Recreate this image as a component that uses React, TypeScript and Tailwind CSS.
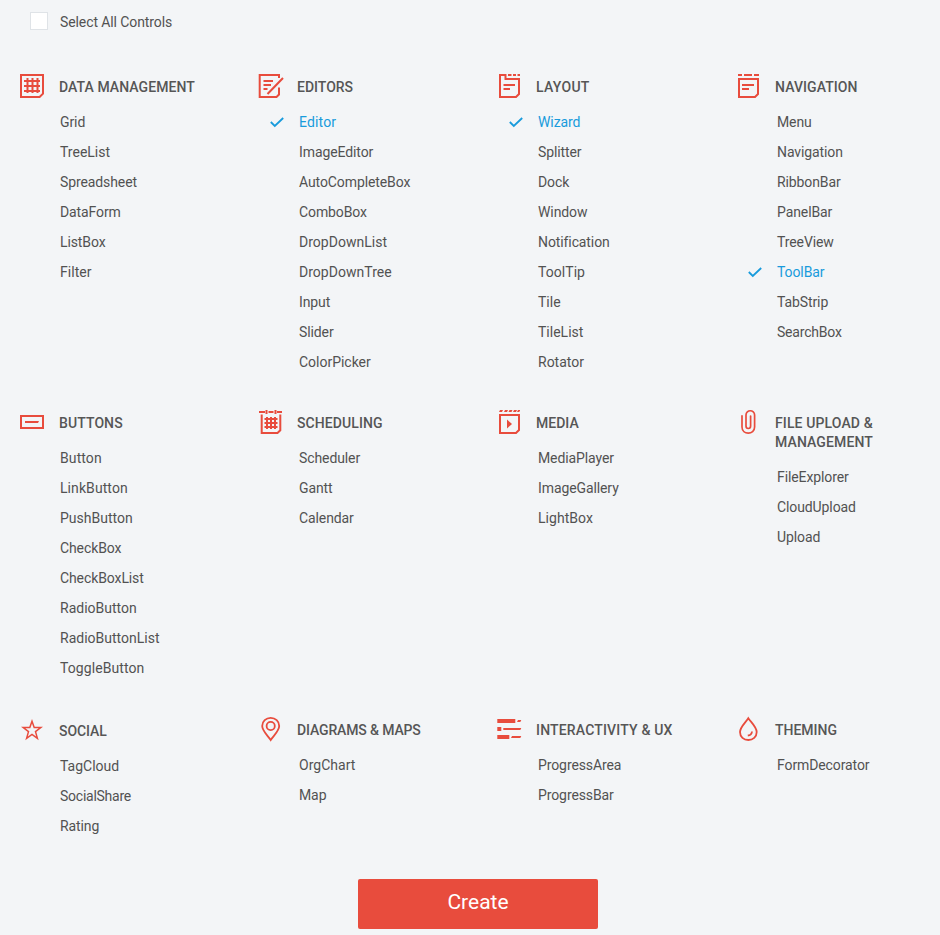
import React from "react";

type IconName =
  | "grid" | "editors" | "layout" | "navigation" | "buttons" | "scheduling"
  | "media" | "clip" | "star" | "pin" | "progress" | "drop";

const shapes: Record<IconName, React.ReactNode> = {
  grid: (
    <>
      <path d="M1 1H23V19.6L19.6 23H1Z" strokeWidth="2" />
      <path d="M7.5 4V19M12.5 4V19M17.5 4V19M4 7H20M4 12H20M4 17H20" strokeWidth="2" />
    </>
  ),
  editors: (
    <>
      <path d="M20 4V1H.7V23H17.5L20 20.5V13.5" strokeWidth="2" />
      <path d="M4.5 7H14M4.5 11H12M4.5 15H8.5M8.5 20L24 4" strokeWidth="2" />
    </>
  ),
  layout: (
    <>
      <path d="M2 1H7.5V5H21V20L18 23H2Z" strokeWidth="2" />
      <path d="M10 1H13.5M15 1H18M19.5 1H22M5.5 11H17M5.5 15H12" strokeWidth="2" />
    </>
  ),
  navigation: (
    <>
      <path d="M2 5H21V20L18 23H2Z" strokeWidth="2" />
      <path d="M1 1H5M7 1H15M17 1H22M5 11H17M5 15H12" strokeWidth="2" />
    </>
  ),
  buttons: (
    <>
      <path d="M1 6H23V18H1Z" strokeWidth="2" />
      <path d="M5 11H19L18 13H5Z" fill="currentColor" stroke="none" />
    </>
  ),
  scheduling: (
    <>
      <path d="M2.7 4.5V23H18.5L21.3 20.3V4.5" strokeWidth="2" />
      <path d="M0 2H6M7.5 0V4M9.5 2H14.5M16.5 0V4M18 2H23" strokeWidth="2" />
      <path d="M8 7V19M12 7V19M16 7V19M5.5 9H18.5M5.5 13H18.5M5.5 17H18.5" strokeWidth="2" />
    </>
  ),
  media: (
    <>
      <path d="M2 5H21V20L18 23H2Z" strokeWidth="2" />
      <path d="M9 9.5L14 14L9 18.5Z" fill="currentColor" stroke="none" />
      <path d="M2 0H5L4 2H1ZM7 0H10L9 2H6ZM11.5 0H14.5L13.5 2H10.5ZM16 0H19L18 2H15ZM20 0H22V1L21 2H19Z" fill="currentColor" stroke="none" />
    </>
  ),
  clip: (
    <path
      d="M5 5.8V17C5 25.2 17.6 25.2 17.6 17V5C17.6 -.7 9 -.7 9 5V16C9 19.3 13.6 19.3 13.6 16V6"
      strokeWidth="1.7"
      strokeLinecap="round"
    />
  ),
  star: (
    <path
      d="M12 4.2L14.2 10.5H20.8L15.5 14.6L17.4 21.3L12 17.5L6.6 21.3L8.5 14.6L3.2 10.5H9.8Z"
      strokeWidth="1.5"
    />
  ),
  pin: (
    <>
      <path d="M11.7 23C8.8 18.5 3.2 14 3.2 9C3.2 4.3 7 .9 11.7 .9S20.2 4.3 20.2 9C20.2 14 14.6 18.5 11.7 23Z" strokeWidth="1.8" />
      <circle cx="11.7" cy="9" r="4.1" strokeWidth="1.8" />
    </>
  ),
  progress: (
    <g fill="currentColor" stroke="none">
      <path d="M-.7 2H17.3V6H-.7ZM-.7 10H3.3V14H-.7ZM-.7 18H11.3V22H-.7Z" />
      <path d="M20 3H23.3L22.3 5H19ZM5.3 11H23.3L22.3 13H5.3ZM14 19H23.3L22.3 21H13Z" />
    </g>
  ),
  drop: (
    <>
      <path d="M11.3 1.2C9 5 3 10 3 15C3 19.8 6.7 23 11.3 23S19.7 19.8 19.7 15C19.7 10 13.7 5 11.3 1.2Z" strokeWidth="1.8" />
      <path d="M15 14.5C14.8 16.7 13.3 18.3 10.8 18.5" strokeWidth="1.8" />
    </>
  ),
};

function Icon({ name }: { name: IconName }) {
  return (
    <svg viewBox="0 0 24 24" className="-mb-px h-6 w-6 shrink-0 overflow-visible text-[#e84c3d]" fill="none" stroke="currentColor">
      {shapes[name]}
    </svg>
  );
}

interface Group {
  icon: IconName;
  title: string[];
  items: string[];
  selected?: string;
  lowered?: boolean;
  tracking?: string;
}

const rows: Group[][] = [
  [
    { icon: "grid", title: ["DATA MANAGEMENT"], tracking: "tracking-[0.07px]", items: ["Grid", "TreeList", "Spreadsheet", "DataForm", "ListBox", "Filter"] },
    { icon: "editors", title: ["EDITORS"], selected: "Editor", items: ["Editor", "ImageEditor", "AutoCompleteBox", "ComboBox", "DropDownList", "DropDownTree", "Input", "Slider", "ColorPicker"] },
    { icon: "layout", title: ["LAYOUT"], tracking: "tracking-[0.3px]", selected: "Wizard", items: ["Wizard", "Splitter", "Dock", "Window", "Notification", "ToolTip", "Tile", "TileList", "Rotator"] },
    { icon: "navigation", title: ["NAVIGATION"], selected: "ToolBar", tracking: "tracking-[0.07px]", items: ["Menu", "Navigation", "RibbonBar", "PanelBar", "TreeView", "ToolBar", "TabStrip", "SearchBox"] },
  ],
  [
    { icon: "buttons", title: ["BUTTONS"], tracking: "tracking-[0.1px]", items: ["Button", "LinkButton", "PushButton", "CheckBox", "CheckBoxList", "RadioButton", "RadioButtonList", "ToggleButton"] },
    { icon: "scheduling", title: ["SCHEDULING"], tracking: "tracking-[0.1px]", items: ["Scheduler", "Gantt", "Calendar"] },
    { icon: "media", title: ["MEDIA"], items: ["MediaPlayer", "ImageGallery", "LightBox"] },
    { icon: "clip", title: ["FILE UPLOAD &", "MANAGEMENT"], tracking: "tracking-[0.12px]", items: ["FileExplorer", "CloudUpload", "Upload"] },
  ],
  [
    { icon: "star", title: ["SOCIAL"], lowered: true, tracking: "tracking-[-0.1px]", items: ["TagCloud", "SocialShare", "Rating"] },
    { icon: "pin", title: ["DIAGRAMS & MAPS"], tracking: "tracking-[-0.14px]", items: ["OrgChart", "Map"] },
    { icon: "progress", title: ["INTERACTIVITY & UX"], tracking: "tracking-[0.17px]", items: ["ProgressArea", "ProgressBar"] },
    { icon: "drop", title: ["THEMING"], items: ["FormDecorator"] },
  ],
];

const rowHeights = ["h-[336px]", "h-[307px]", "h-[162px]"];

// Item labels whose width departs from the default tracking.
const itemTracking: Record<string, string> = {
  "Editor": "tracking-[0.15px]",
  "DropDownTree": "tracking-[0.03px]",
  "ColorPicker": "tracking-[-0.02px]",
  "TreeList": "tracking-normal",
  "Filter": "tracking-[0.05px]",
  "Button": "tracking-[0.1px]",
  "LinkButton": "tracking-[0.08px]",
  "PushButton": "tracking-normal",
  "RadioButton": "tracking-normal",
  "RadioButtonList": "tracking-normal",
  "ToggleButton": "tracking-[0.08px]",
  "DropDownList": "tracking-[0.03px]",
  "ToolTip": "tracking-[0.05px]",
  "Tile": "tracking-normal",
  "TileList": "tracking-normal",
  "Rotator": "tracking-normal",
  "TagCloud": "tracking-normal",
  "OrgChart": "tracking-[0.03px]",
  "LightBox": "tracking-[0.04px]",
  "SearchBox": "tracking-[-0.2px]",
  "SocialShare": "tracking-[-0.25px]",
};

function ControlGroup({ group, first }: { group: Group; first: boolean }) {
  return (
    <section>
      <div className="flex items-start">
        <Icon name={group.icon} />
        <h2
          className={`text-[14px] leading-[19px] font-medium whitespace-nowrap text-[#565656] ${first ? "ml-[15px]" : "ml-[14px]"} ${group.lowered ? "pt-[5px]" : "pt-1"} ${group.tracking ?? ""}`}
        >
          {group.title.map((line) => (
            <span key={line} className="block">{line}</span>
          ))}
        </h2>
      </div>
      <ul className="mt-2.5">
        {group.items.map((item) => {
          const on = item === group.selected;
          return (
            <li key={item} className={`flex h-[30px] items-center text-[14px] leading-[30px] ${on ? "text-[#189bdc]" : "text-[#525252]"}`}>
              <span className="flex w-10 pl-[11px]">
                {on && (
                  <svg viewBox="0 0 14 12" className="h-3 w-3.5" fill="none" stroke="currentColor" strokeWidth="1.8">
                    <path d="M.8 6L4.8 10L13.2 2" />
                  </svg>
                )}
              </span>
              <span className={itemTracking[item] ?? "tracking-[-0.1px]"}>{item}</span>
            </li>
          );
        })}
      </ul>
    </section>
  );
}

export default function App() {
  return (
    <main className="h-[935px] w-[940px] overflow-hidden bg-[#f3f5f7] font-[Roboto,sans-serif]">
      <label className="flex h-[74px] items-start pt-3 pl-[30px] text-[14px] leading-5 text-[#525252]">
        <span className="h-[18px] w-[18px] border border-[#dfe3e7] bg-white" />
        <span className="ml-3 tracking-[-0.1px]">Select All Controls</span>
      </label>
      {rows.map((groups, i) => (
        <div key={i} className={`grid grid-cols-[repeat(4,239px)] pl-5 ${rowHeights[i]}`}>
          {groups.map((g, col) => (
            <ControlGroup key={g.icon} group={g} first={col === 0} />
          ))}
        </div>
      ))}
      <button className="ml-[358px] block h-[50px] w-[240px] rounded-[2px] bg-[#e84c3d] pb-0.5 text-[21px] text-white">
        Create
      </button>
    </main>
  );
}
